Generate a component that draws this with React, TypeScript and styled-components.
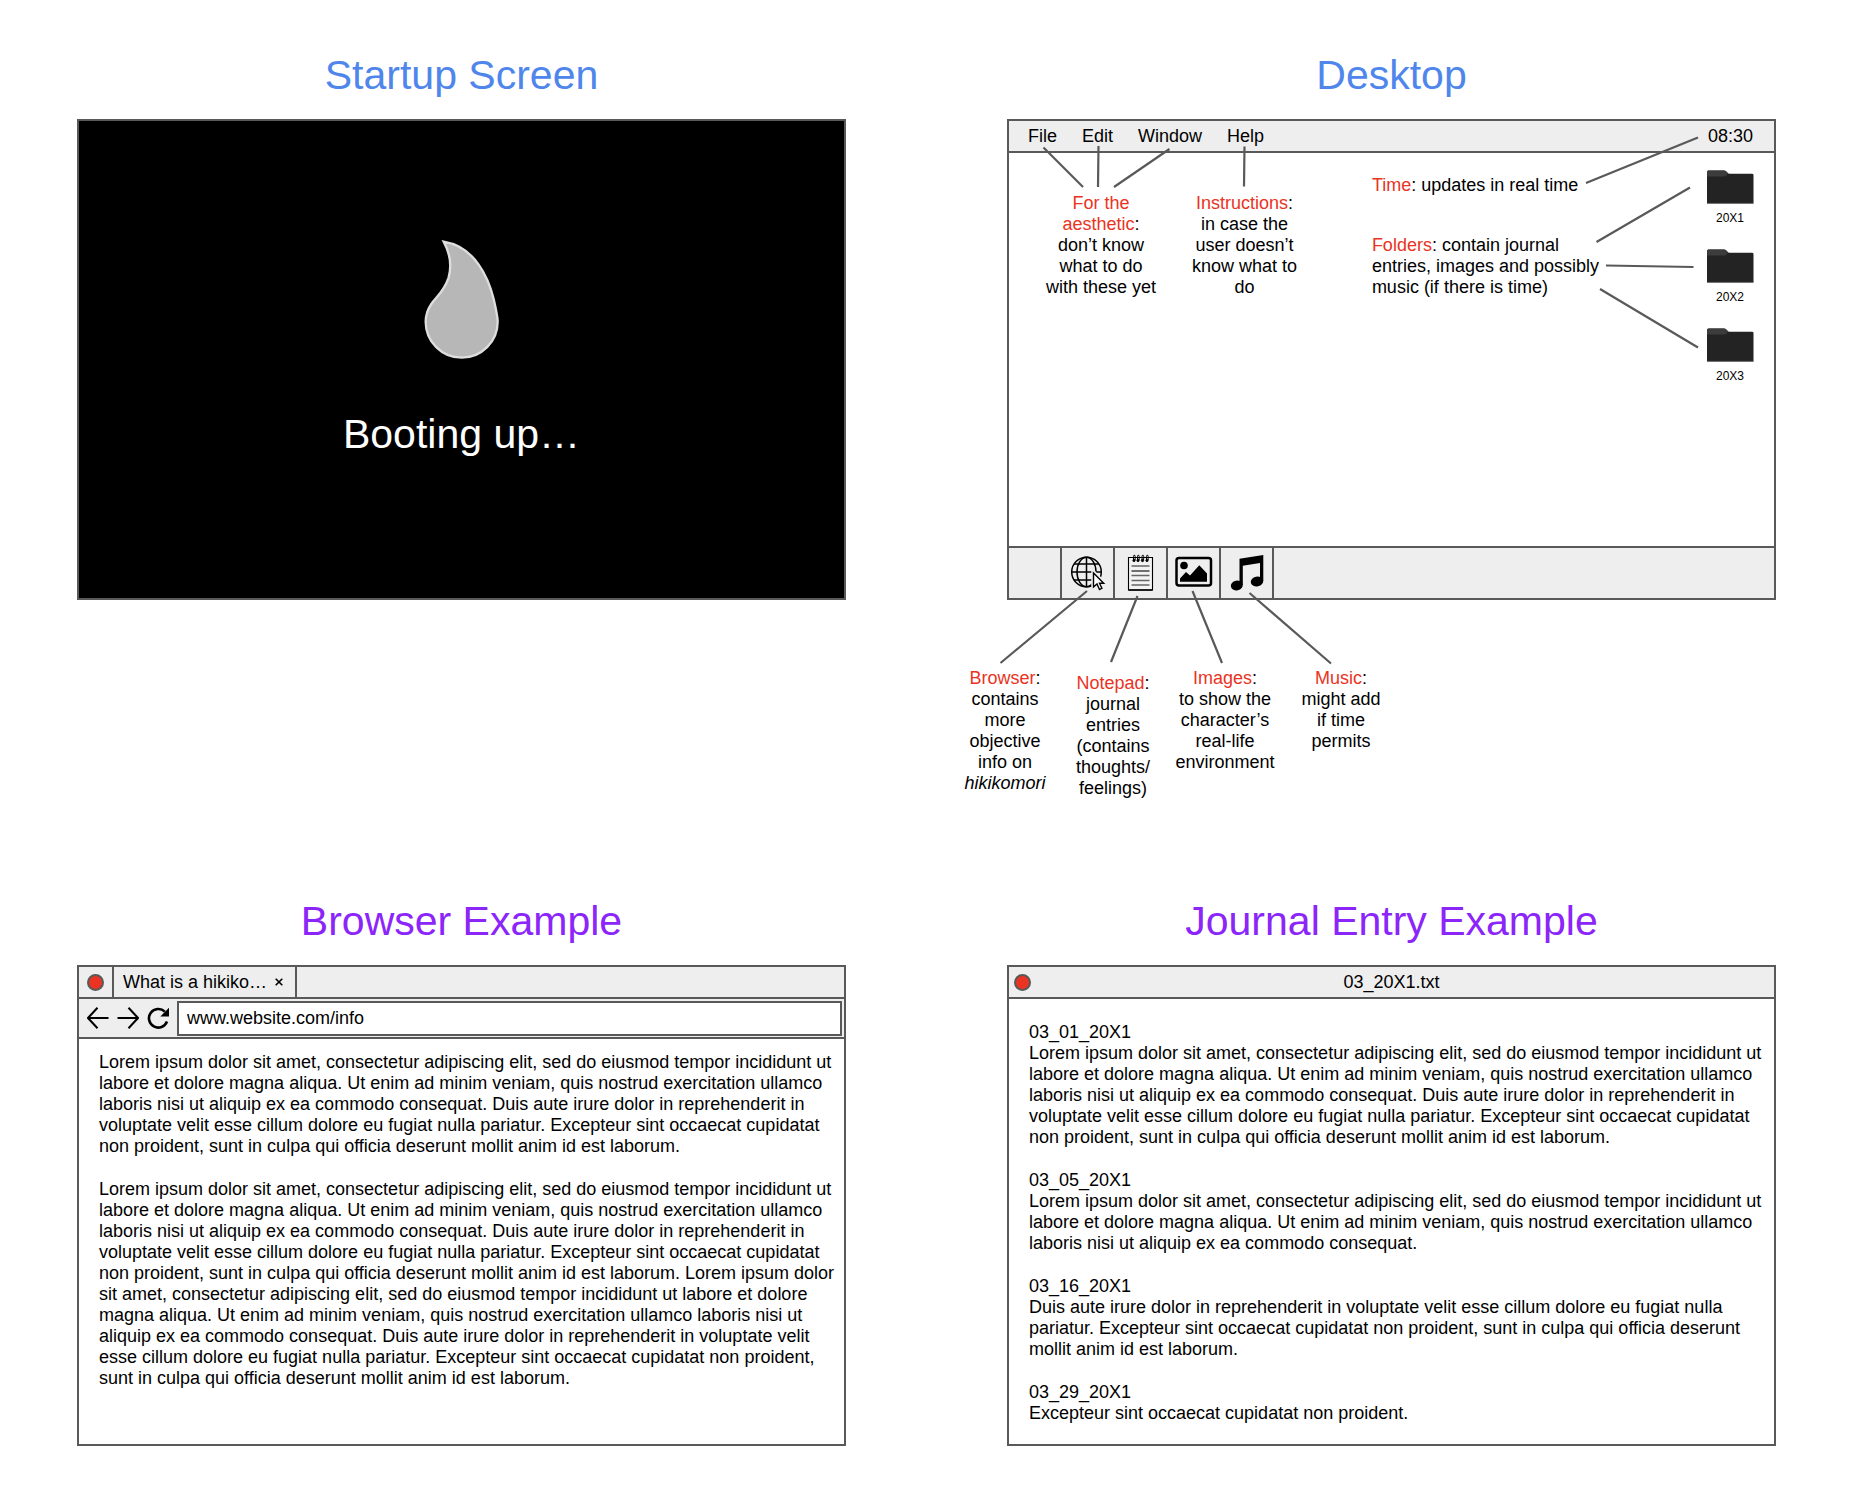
import React from "react";
import styled, { createGlobalStyle } from "styled-components";

const line = "#595959";
const chrome = "#eeeeee";
const red = "#ea3323";

const GlobalStyle = createGlobalStyle`
  *, *::before, *::after { box-sizing: border-box; }
  body {
    margin: 0;
    background: #ffffff;
    color: #000000;
    font: 18px/21px "Liberation Sans", Arial, sans-serif;
  }
  button, input { font: inherit; color: inherit; }
`;

const Board = styled.main`
  display: grid;
  grid-template-columns: repeat(2, minmax(0, 1fr));
  gap: 98px 161px;
  padding: 51px 82px 51px 77px;
`;

const Panel = styled.section`
  display: flex;
  flex-direction: column;
`;

const Title = styled.h2<{ $color: string }>`
  margin: 0 0 20px;
  color: ${(p) => p.$color};
  font-size: 41px;
  line-height: 48px;
  font-weight: 400;
  text-align: center;
`;

const Frame = styled.div`
  position: relative;
  display: flex;
  flex-direction: column;
  min-height: 481px;
  border: 2px solid ${line};
  background: #ffffff;
`;

const BootFrame = styled(Frame)`
  align-items: center;
  justify-content: center;
  gap: 51px;
  padding-bottom: 22px;
  background: #000000;
`;

const BootText = styled.p`
  margin: 0;
  color: #ffffff;
  font-size: 41px;
  line-height: 48px;
`;

const Bar = styled.header`
  display: flex;
  align-items: stretch;
  height: 32px;
  border-bottom: 2px solid ${line};
  background: ${chrome};
`;

const MenuBar = styled(Bar)`
  align-items: center;
  justify-content: space-between;
  padding: 0 21px 0 19px;
`;

const Menu = styled.nav`
  display: flex;
  gap: 25px;
`;

const PlainButton = styled.button`
  display: flex;
  align-items: center;
  justify-content: center;
  padding: 0;
  border: 0;
  background: none;
  cursor: pointer;
`;

const DesktopArea = styled.div`
  flex: 1;
  display: flex;
  justify-content: space-between;
  padding: 17px 20px 16px 37px;
`;

const NoteGroup = styled.div`
  display: flex;
  gap: 36px;
  padding-top: 23px;
`;

const SideNotes = styled.div`
  display: flex;
  flex-direction: column;
  gap: 39px;
  padding-top: 5px;
`;

const RightSide = styled.div`
  display: flex;
  gap: 107px;
`;

const NoteBox = styled.div<{ $align: string; $drop?: boolean }>`
  padding-top: ${(p) => (p.$drop ? "5px" : "0")};
  text-align: ${(p) => p.$align};
  white-space: nowrap;
`;

const NoteLine = styled.div`
  height: 21px;
`;

const Term = styled.span`
  color: ${red};
`;

const FolderList = styled.div`
  display: flex;
  flex-direction: column;
  gap: 24px;
`;

const FolderButton = styled(PlainButton)`
  flex-direction: column;
  gap: 7px;
  width: 48px;
  font-size: 12px;
  line-height: 14px;
`;

const Taskbar = styled.footer`
  display: flex;
  height: 52px;
  border-top: 2px solid ${line};
  background: ${chrome};
`;

const TaskSlot = styled.div`
  display: flex;
  justify-content: center;
  width: 53px;
  border-right: 2px solid ${line};
`;

const DockNotes = styled.div`
  display: grid;
  grid-template-columns: 92px 92px 100px 100px;
  gap: 16px;
  margin: 68px 0 0 -48px;
`;

const Connectors = styled.svg<{ $side: "left" | "right" }>`
  position: absolute;
  top: -2px;
  ${(p) => p.$side}: -2px;
  overflow: visible;
  pointer-events: none;
  stroke: ${line};
  stroke-width: 2.2;
`;

const DotCell = styled.div`
  display: flex;
  align-items: center;
  justify-content: center;
  width: 35px;
  border-right: 2px solid ${line};
`;

const CloseDot = styled.button`
  width: 17px;
  height: 17px;
  padding: 0;
  border: 2px solid ${line};
  border-radius: 50%;
  background: ${red};
  cursor: pointer;
`;

const Tab = styled.div`
  display: flex;
  align-items: center;
  justify-content: space-between;
  width: 183px;
  padding: 0 12px 0 9px;
  border-right: 2px solid ${line};
`;

const Toolbar = styled.div`
  display: flex;
  align-items: center;
  gap: 8px;
  height: 40px;
  padding: 0 2px 0 8px;
  border-bottom: 2px solid ${line};
  background: ${chrome};
`;

const Address = styled.input`
  flex: 1;
  min-width: 0;
  height: 35px;
  padding: 0 8px;
  border: 2px solid ${line};
  border-radius: 0;
  background: #ffffff;
  outline: none;
`;

const TitleBar = styled(Bar)`
  display: grid;
  grid-template-columns: 17px 1fr 17px;
  align-items: center;
  padding: 0 5px;
  text-align: center;
`;

const Article = styled.article<{ $top: number }>`
  display: flex;
  flex-direction: column;
  gap: 22px;
  padding: ${(p) => p.$top}px 6px 19px 20px;
`;

const Paragraph = styled.p`
  margin: 0;
`;

const EntryDate = styled.h3`
  margin: 0;
  font-size: 18px;
  font-weight: 400;
`;

const FlameDrop = () => (
  <svg width="76" height="120" viewBox="71 55 228 360" aria-hidden="true">
    <path
      d="M130 63C149 98 154 137 145 170C132 212 107 229 93 250C81 268 76 285 76 303A108 108 0 0 0 292 303C292 285 286 262 280 235C270 195 255 160 235 132C209 94 172 70 130 63Z"
      fill="#b7b7b7"
      stroke="#dedede"
      strokeWidth="7"
    />
  </svg>
);

const FolderIcon = () => (
  <svg width="48" height="34" viewBox="0 0 48 34" aria-hidden="true">
    <path d="M1 33.500V2Q1 .500 2.500 .500H18Q20 .500 21 2.200Q22 3.700 24 3.700H46Q47.500 3.700 47.500 5V33.500Z" fill="#232323" />
    <path d="M1 6.500V2Q1 .500 2.500 .500H18Q20 .500 21 2.200L22 3.500Q20.500 6.500 18 6.500Z" fill="#3c3c3c" />
    <path d="M1 33.200H47.500" stroke="#4a4a4a" strokeWidth=".6" />
  </svg>
);

const GlobeIcon = () => (
  <svg width="40" height="40" viewBox="0.5 0 40 40" fill="none" stroke="#000" strokeWidth="1.500" aria-hidden="true">
    <circle cx="19" cy="19" r="14.800" />
    <ellipse cx="19" cy="19" rx="9.500" ry="14.800" />
    <path d="M19 4V34M4 19H34M6.500 11H31.500M6.500 27H31.500" />
    <path d="M26 19.500V34.500L29.500 31.500L32 36.800L34.600 35.500L32.300 30.500H36.500Z" fill={chrome} stroke={chrome} strokeWidth="4.500" />
    <path d="M26 20V34L29.500 31L32 36.500L34.400 35.300L32 30.200H36.200Z" fill="#fff" strokeWidth="1.400" />
  </svg>
);

const NotepadIcon = () => (
  <svg width="40" height="40" viewBox="1 0 40 40" fill="none" stroke="#000" aria-hidden="true">
    <path d="M8.500 4.500H32.500V37H8.500Z" fill="#f3f3f3" strokeWidth="1.100" />
    <path d="M8.500 37H32.500" strokeWidth="1.500" />
    <path d="M11.500 13H29.500M11.500 22.500H29.500M11.500 27.500H29.500M11.500 32H29.500" stroke="#666" strokeWidth="1.300" />
    <path d="M11.500 18H29.500" strokeWidth="1.100" />
    {[13.5, 17.5, 22, 26.5].map((x) => (
      <g key={x}>
        <path d={`M${x} 7V3.500Q${x} 2 ${x + 1.2} 2.200Q${x + 2} 2.500 ${x + 1.6} 7`} strokeWidth="1" />
        <circle cx={x + 0.5} cy="7.500" r="1.200" fill="#000" strokeWidth=".7" />
      </g>
    ))}
  </svg>
);

const PictureIcon = () => (
  <svg width="40" height="40" viewBox="0.5 0 40 40" aria-hidden="true">
    <rect x="3" y="5" width="34.500" height="27.500" rx="2.500" fill="none" stroke="#000" strokeWidth="2.500" />
    <circle cx="10.500" cy="12.500" r="3.800" />
    <path d="M6.500 28.800V25.500L12.500 19L16.500 22.500L25.800 12.300L33.500 20.500V28.800Z" />
  </svg>
);

const MusicIcon = () => (
  <svg width="40" height="40" viewBox="1 0 40 40" aria-hidden="true">
    <path d="M13.500 5.800L37.300 2V28H34V10L16.800 12.800V32H13.500Z" />
    <ellipse cx="10.800" cy="32.500" rx="6" ry="4.900" transform="rotate(-12 10.800 32.500)" />
    <ellipse cx="31" cy="28.500" rx="6.300" ry="4.900" transform="rotate(-12 31 28.500)" />
  </svg>
);

const ArrowIcon = ({ forward }: { forward?: boolean }) => (
  <svg width="22" height="22" viewBox="0 0 22 22" fill="none" stroke="#000" strokeWidth="2" aria-hidden="true">
    <path d={forward ? "M.500 11H21M11.500 .800L21 11L11.500 21.200" : "M21.500 11H1M10.500 .800L1 11L10.500 21.200"} />
  </svg>
);

const ReloadIcon = () => (
  <svg width="22" height="22" viewBox="0 0 22 22" aria-hidden="true">
    <path d="M20 14.500A9.300 9.300 0 1 1 17.800 4.600" fill="none" stroke="#000" strokeWidth="2.600" />
    <path d="M22 .800V9.500H13.300Z" />
  </svg>
);

const CrossIcon = () => (
  <svg width="8" height="8" viewBox="0 0 8 8" aria-hidden="true">
    <path d="M.700 .700L7.300 7.300M7.300 .700L.700 7.300" stroke="#000" strokeWidth="1.600" />
  </svg>
);

type NoteProps = {
  term: string[];
  after?: string;
  lines?: React.ReactNode[];
  align?: "left" | "center";
  drop?: boolean;
};

const Note = ({ term, after = "", lines = [], align = "center", drop }: NoteProps) => (
  <NoteBox $align={align} $drop={drop}>
    {term.map((part, i) => (
      <NoteLine key={part}>
        <Term>{part}</Term>
        {i === term.length - 1 && `:${after}`}
      </NoteLine>
    ))}
    {lines.map((text, i) => (
      <NoteLine key={i}>{text}</NoteLine>
    ))}
  </NoteBox>
);

const loremStart =
  "Lorem ipsum dolor sit amet, consectetur adipiscing elit, sed do eiusmod tempor incididunt ut labore et dolore magna aliqua. Ut enim ad minim veniam, quis nostrud exercitation ullamco laboris nisi ut aliquip ex ea commodo consequat.";
const loremEnd =
  "Duis aute irure dolor in reprehenderit in voluptate velit esse cillum dolore eu fugiat nulla pariatur. Excepteur sint occaecat cupidatat non proident, sunt in culpa qui officia deserunt mollit anim id est laborum.";
const lorem = `${loremStart} ${loremEnd}`;

const paragraphs = [lorem, `${lorem} ${lorem}`];

const entries = [
  { date: "03_01_20X1", text: lorem },
  { date: "03_05_20X1", text: loremStart },
  { date: "03_16_20X1", text: loremEnd },
  { date: "03_29_20X1", text: "Excepteur sint occaecat cupidatat non proident." },
];

const dock = [
  { name: "Browser", Icon: GlobeIcon },
  { name: "Notepad", Icon: NotepadIcon },
  { name: "Images", Icon: PictureIcon },
  { name: "Music", Icon: MusicIcon },
];

export default function App() {
  return (
    <>
      <GlobalStyle />
      <Board>
        <Panel>
          <Title $color="#4f86ec">Startup Screen</Title>
          <BootFrame>
            <FlameDrop />
            <BootText>Booting up…</BootText>
          </BootFrame>
        </Panel>

        <Panel>
          <Title $color="#4f86ec">Desktop</Title>
          <Frame>
            <MenuBar>
              <Menu>
                {["File", "Edit", "Window", "Help"].map((item) => (
                  <PlainButton key={item} type="button">{item}</PlainButton>
                ))}
              </Menu>
              <time>08:30</time>
            </MenuBar>
            <DesktopArea>
              <NoteGroup>
                <Note
                  term={["For the", "aesthetic"]}
                  lines={["don’t know", "what to do", "with these yet"]}
                />
                <Note
                  term={["Instructions"]}
                  lines={["in case the", "user doesn’t", "know what to", "do"]}
                />
              </NoteGroup>
              <RightSide>
                <SideNotes>
                  <Note align="left" term={["Time"]} after=" updates in real time" />
                  <Note
                    align="left"
                    term={["Folders"]}
                    after=" contain journal"
                    lines={["entries, images and possibly", "music (if there is time)"]}
                  />
                </SideNotes>
                <FolderList>
                  {["20X1", "20X2", "20X3"].map((name) => (
                    <FolderButton key={name} type="button">
                      <FolderIcon />
                      {name}
                    </FolderButton>
                  ))}
                </FolderList>
              </RightSide>
            </DesktopArea>
            <Taskbar>
              <TaskSlot />
              {dock.map(({ name, Icon }) => (
                <TaskSlot key={name}>
                  <PlainButton type="button" aria-label={name}><Icon /></PlainButton>
                </TaskSlot>
              ))}
            </Taskbar>
            <Connectors $side="left" width="340" height="550" aria-hidden="true">
              <path d="M36.500 28.500L76 68M91.500 27L91 68M162.500 30L107 68M237.500 27.500L237 67.500" />
              <path d="M80 472L-6.500 544M130.500 477L104 543M185.500 472L215 544M242.500 474L324 544.500" />
            </Connectors>
            <Connectors $side="right" width="200" height="240" aria-hidden="true">
              <path d="M10 64L122 18.500M20.500 123L114 68.500M30 146.500L117.500 148M24 170L122 228.500" />
            </Connectors>
          </Frame>
          <DockNotes>
            <Note
              term={["Browser"]}
              lines={["contains", "more", "objective", "info on", <em>hikikomori</em>]}
            />
            <Note
              drop
              term={["Notepad"]}
              lines={["journal", "entries", "(contains", "thoughts/", "feelings)"]}
            />
            <Note
              term={["Images"]}
              lines={["to show the", "character’s", "real-life", "environment"]}
            />
            <Note term={["Music"]} lines={["might add", "if time", "permits"]} />
          </DockNotes>
        </Panel>

        <Panel>
          <Title $color="#8b25f9">Browser Example</Title>
          <Frame>
            <Bar>
              <DotCell><CloseDot type="button" aria-label="Close window" /></DotCell>
              <Tab>
                <PlainButton type="button">What is a hikiko…</PlainButton>
                <PlainButton type="button" aria-label="Close tab"><CrossIcon /></PlainButton>
              </Tab>
            </Bar>
            <Toolbar>
              <PlainButton type="button" aria-label="Back"><ArrowIcon /></PlainButton>
              <PlainButton type="button" aria-label="Forward"><ArrowIcon forward /></PlainButton>
              <PlainButton type="button" aria-label="Reload"><ReloadIcon /></PlainButton>
              <Address aria-label="Address" type="text" defaultValue="www.website.com/info" />
            </Toolbar>
            <Article $top={13}>
              {paragraphs.map((text, i) => (
                <Paragraph key={i}>{text}</Paragraph>
              ))}
            </Article>
          </Frame>
        </Panel>

        <Panel>
          <Title $color="#8b25f9">Journal Entry Example</Title>
          <Frame>
            <TitleBar>
              <CloseDot type="button" aria-label="Close window" />
              <span>03_20X1.txt</span>
            </TitleBar>
            <Article $top={23}>
              {entries.map((entry) => (
                <div key={entry.date}>
                  <EntryDate>{entry.date}</EntryDate>
                  <Paragraph>{entry.text}</Paragraph>
                </div>
              ))}
            </Article>
          </Frame>
        </Panel>
      </Board>
    </>
  );
}
